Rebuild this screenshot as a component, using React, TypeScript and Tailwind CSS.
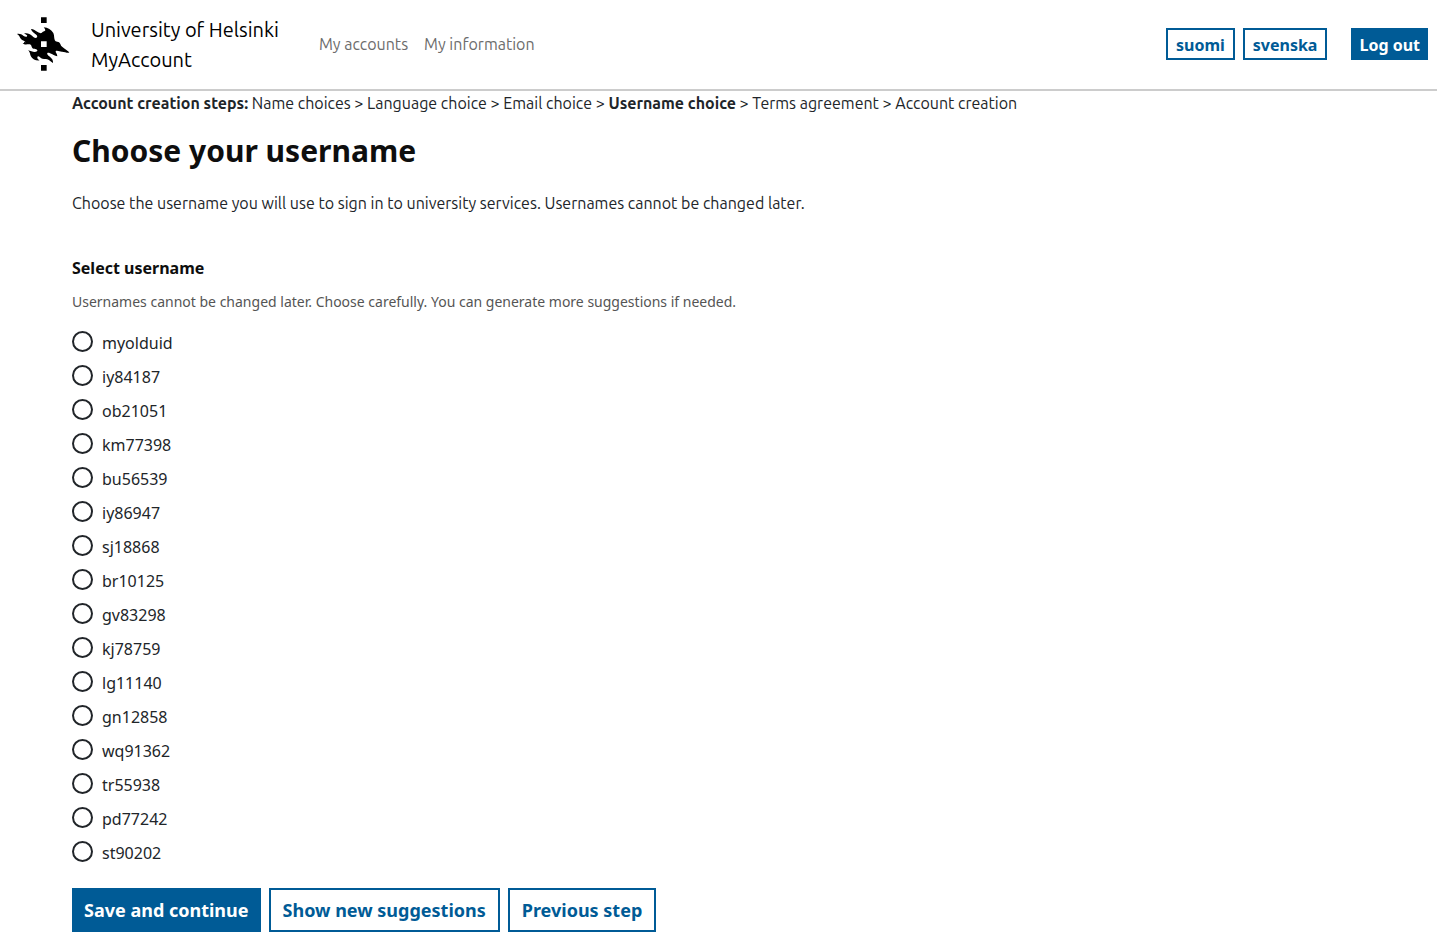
const usernames = [
  "myolduid",
  "iy84187",
  "ob21051",
  "km77398",
  "bu56539",
  "iy86947",
  "sj18868",
  "br10125",
  "gv83298",
  "kj78759",
  "lg11140",
  "gn12858",
  "wq91362",
  "tr55938",
  "pd77242",
  "st90202",
];

const steps = [
  "Name choices",
  "Language choice",
  "Email choice",
  "Username choice",
  "Terms agreement",
  "Account creation",
];

const currentStep = "Username choice";

function FlameLogo() {
  return (
    <svg viewBox="21 21 159 162" className="h-[54px] w-[53px] shrink-0" aria-hidden="true">
      <path
        fillRule="evenodd"
        d="M21 72 C28 70 35 73 41 78 C46 82 54 81 51 76 C48 73 45 73 42 70 C52 68 60 71 66 77 C70 82 77 86 81 82 C84 76 77 73 72 69 C67 65 64 61 63 57 C71 57 76 62 83 66 C90 70 93 71 97 67 C102 63 108 64 105 58 C104 55 102 53 101 52 C114 53 124 59 130 69 C134 78 131 88 137 94 C143 96 149 96 151 102 C153 110 159 112 164 116 C170 120 175 123 178 128 C169 129 164 125 156 125 C149 125 144 121 137 123 C136 128 142 131 142 139 C134 138 128 132 120 130 C114 127 110 129 112 133 C116 141 131 144 129 159 C121 155 117 148 108 147 C99 147 95 147 90 142 C84 136 80 140 83 146 C85 149 88 150 91 151 C77 153 68 147 64 141 C59 134 62 128 54 121 C64 124 74 129 81 124 C85 119 78 117 71 116 C64 114 66 108 62 104 C55 101 45 107 38 100 C43 99 46 99 46 96 C43 92 37 92 33 87 C29 82 28 75 21 72 Z M93 94 V111 H110 V94 Z"
      />
      <path d="M93 22 H110 V39 H93 Z M93 165 H110 V182 H93 Z" />
    </svg>
  );
}

export default function App() {
  return (
    <div className="min-h-screen bg-white font-['Noto_Sans',sans-serif] text-base leading-6 text-[#212529]">
      <header className="flex min-h-[91px] items-center border-b-2 border-[#cccccc] pr-[9px] pb-px pl-[17px] font-[Ubuntu,'Open_Sans',sans-serif]">
        <a href="#" className="flex items-center gap-[21px] text-xl leading-[30px] text-black">
          <FlameLogo />
          <span className="pt-px">
            University of Helsinki
            <br />
            MyAccount
          </span>
        </a>
        <nav className="ml-10 flex gap-4 text-[#6c6c6c]">
          <a href="#">My accounts</a>
          <a href="#">My information</a>
        </nav>
        <div className="ml-auto flex gap-2 font-['Noto_Sans',sans-serif] font-bold text-[#005b96]">
          <button type="button" className="h-8 border-2 border-[#005b96] px-2 pt-px">suomi</button>
          <button type="button" className="h-8 border-2 border-[#005b96] px-2 pt-px">svenska</button>
          <button type="button" className="ml-4 h-8 bg-[#005b96] px-2 pt-px text-white">Log out</button>
        </div>
      </header>

      <main className="px-[72px]">
        <p className="font-[Ubuntu,'Open_Sans',sans-serif]">
          <strong className="font-bold">Account creation steps:</strong>{" "}
          {steps.map((step, i) => (
            <span key={step}>
              {i > 0 && " > "}
              {step === currentStep ? <strong className="font-bold">{step}</strong> : step}
            </span>
          ))}
        </p>

        <h1 className="mt-3 text-[30px] leading-[48px] font-bold text-[#0e0e0e]">Choose your username</h1>
        <p className="mt-4 font-[Ubuntu,'Open_Sans',sans-serif]">
          Choose the username you will use to sign in to university services. Usernames cannot be changed later.
        </p>

        <form onSubmit={(e) => e.preventDefault()}>
          <fieldset className="mt-[41px]">
            <legend className="font-bold text-[#0e0e0e]">Select username</legend>
            <p className="mt-3 text-sm leading-5 text-[#555555]">
              Usernames cannot be changed later. Choose carefully. You can generate more suggestions if needed.
            </p>
            <div className="mt-[17px]">
              {usernames.map((name) => (
                <label key={name} className="flex h-[34px] items-start gap-[9px]">
                  <input
                    type="radio"
                    name="username"
                    value={name}
                    className="mt-[2px] size-[21px] shrink-0 appearance-none rounded-full border-2 border-[#212529] checked:bg-[#005b96]"
                  />
                  <span className="pt-[2px]">{name}</span>
                </label>
              ))}
            </div>
          </fieldset>

          <div className="mt-[15px] flex gap-2 pb-[14px] text-lg font-bold text-[#005b96]">
            <button type="submit" className="h-11 bg-[#005b96] px-3 text-white">Save and continue</button>
            <button type="button" className="h-11 border-2 border-[#005b96] px-3">Show new suggestions</button>
            <button type="button" className="h-11 border-2 border-[#005b96] px-3">Previous step</button>
          </div>
        </form>
      </main>
    </div>
  );
}
